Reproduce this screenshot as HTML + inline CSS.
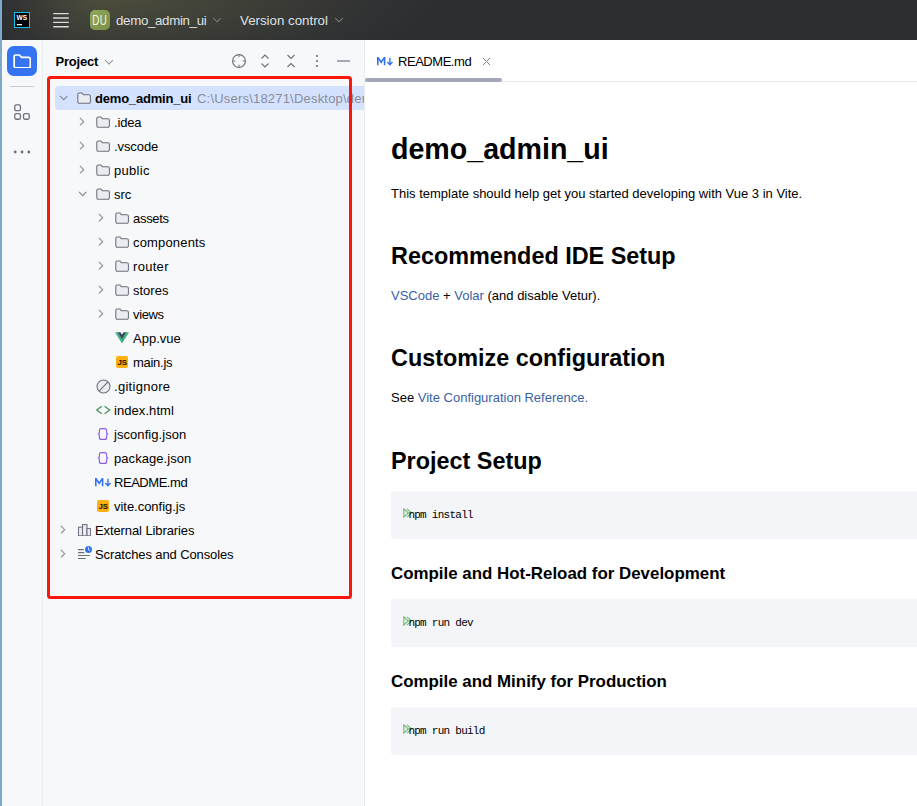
<!DOCTYPE html>
<html><head><meta charset="utf-8">
<style>
*{box-sizing:border-box;margin:0;padding:0}
html,body{width:917px;height:806px;overflow:hidden;background:#fff}
body{font-family:"Liberation Sans",sans-serif;font-size:13px;color:#000;position:relative}
.abs{position:absolute}
#edge{left:0;top:0;width:2px;height:806px;background:#7ea9c9}
#top{left:2px;top:0;width:915px;height:40px;background:#2b2d30}
#top .t{position:absolute;color:#dfe1e5;font-size:13.3px;white-space:nowrap;line-height:16px}
#strip{left:2px;top:40px;width:41px;height:766px;background:#f7f8fa;border-right:1px solid #ebecf0}
#proj{left:43px;top:40px;width:322px;height:766px;background:#f7f8fa;border-right:1px solid #ebecf0;overflow:hidden}
#ed{left:365px;top:40px;width:552px;height:766px;background:#fff;overflow:hidden}
.row{position:absolute;left:0;height:24px;width:322px;white-space:nowrap}
.row span.l{position:absolute;top:5px;line-height:16px;font-size:13px;color:#000;letter-spacing:0}
.row svg{position:absolute}
#md{position:absolute;left:26px;top:0;width:600px}
#md .x{position:absolute;left:0;white-space:nowrap}
#md h1,#md h2,#md h3{font-weight:bold;color:#000;line-height:1}
.code{position:absolute;left:0;width:560px;height:48px;background:#f3f5f8;border-radius:3px}
.code span{position:absolute;left:17.4px;top:16.5px;font-family:"Liberation Mono",monospace;font-size:11px;letter-spacing:-0.74px;line-height:14px;color:#000;white-space:pre}
a{color:#3a5fa8;text-decoration:none}
</style></head><body>
<div id="edge" class="abs"></div>
<div id="top" class="abs"><div class="abs" style="left:0;top:0;width:98px;height:40px;background:radial-gradient(ellipse 115px 85px at 98px -4px,#4d4e3a 0%,#46473a 20%,#3b3c36 50%,#303233 80%,#2b2d30 100%)"></div><div class="abs" style="left:98px;top:0;width:420px;height:40px;background:radial-gradient(ellipse 350px 85px at 0px -4px,#4d4e3a 0%,#46473a 20%,#3b3c36 50%,#303233 80%,#2b2d30 100%)"></div>
  <!-- WS logo -->
  <svg class="abs" style="left:12px;top:12px" width="16" height="16" viewBox="0 0 16 16"><rect x="0.5" y="0.5" width="15" height="15" fill="#000" stroke="#12c0ea"/><text x="2.6" y="8" font-family="Liberation Sans" font-weight="bold" font-size="6.6" fill="#fff" textLength="10.6" lengthAdjust="spacingAndGlyphs">WS</text><rect x="2.8" y="12" width="5.2" height="1.3" fill="#fff"/></svg>
  <svg class="abs" style="left:51px;top:12px" width="16" height="16" viewBox="0 0 16 16" fill="#d8dade"><rect x="0" y="0.9" width="16" height="1.4" rx="0.7"/><rect x="0" y="5.3" width="16" height="1.4" rx="0.7"/><rect x="0" y="9.7" width="16" height="1.4" rx="0.7"/><rect x="0" y="14.1" width="16" height="1.4" rx="0.7"/></svg>
  <div class="abs" style="left:88px;top:10px;width:20px;height:20px;border-radius:5px;background:linear-gradient(135deg,#90a657,#7a9047);color:#f4f6ee;font-size:14px;line-height:21px;text-align:center;letter-spacing:0.6px;overflow:visible"><span style="display:inline-block;transform:scaleX(0.7);margin-left:-4px;margin-right:-4px">DU</span></div>
  <div class="t" style="left:114px;top:13px;letter-spacing:-0.33px">demo_admin_ui</div>
  <svg class="abs" style="left:210px;top:16px" width="10" height="8" viewBox="0 0 10 8" fill="none" stroke="#7d8088" stroke-width="1.05"><path d="M1.2 2l3.8 3.8 3.8-3.8"/></svg>
  <div class="t" style="left:238px;top:13px">Version control</div>
  <svg class="abs" style="left:332px;top:16px" width="10" height="8" viewBox="0 0 10 8" fill="none" stroke="#7d8088" stroke-width="1.05"><path d="M1.2 2l3.8 3.8 3.8-3.8"/></svg>
</div>
<div id="strip" class="abs">
  <div class="abs" style="left:5px;top:6px;width:30px;height:30px;border-radius:7px;background:#3574f0"></div>
  <svg class="abs" style="left:10.7px;top:13.6px" width="18.5" height="14.8" preserveAspectRatio="none" viewBox="0 0 16 14" fill="none" stroke="#fff" stroke-width="1.5" stroke-linejoin="round"><path d="M1 2.5a1.5 1.5 0 0 1 1.5-1.5h3l2 2.2h6a1.5 1.5 0 0 1 1.5 1.5v6.8a1.5 1.5 0 0 1-1.5 1.5h-11a1.5 1.5 0 0 1-1.5-1.5z"/></svg>
  <div class="abs" style="left:8px;top:46px;width:24px;height:1.2px;background:#c9ccd6"></div>
  <svg class="abs" style="left:12px;top:64px" width="17" height="17" viewBox="0 0 17 17" fill="none" stroke="#6c707e" stroke-width="1.3"><rect x="0.75" y="0.95" width="5.7" height="5.7" rx="1.4"/><rect x="0.75" y="9.55" width="5.7" height="5.7" rx="1.4"/><rect x="9.55" y="9.55" width="5.7" height="5.7" rx="1.4"/></svg>
  <svg class="abs" style="left:11px;top:110px" width="18" height="4" viewBox="0 0 18 4" fill="#6c707e"><circle cx="2.2" cy="2" r="1.45"/><circle cx="9" cy="2" r="1.45"/><circle cx="15.8" cy="2" r="1.45"/></svg>
</div>
<div id="proj" class="abs">
  <div class="abs" style="left:12.5px;top:14.4px;font-weight:bold;font-size:13px;line-height:16px;color:#000;letter-spacing:-0.2px">Project</div>
  <svg class="abs" style="left:61px;top:18px" width="10" height="8" viewBox="0 0 10 8" fill="none" stroke="#868a98" stroke-width="1.05"><path d="M1 2l4 4 4-4"/></svg>
  <!-- header icons -->
  <svg class="abs" style="left:188px;top:13px" width="16" height="16" viewBox="0 0 16 16" fill="none" stroke="#6c707e" stroke-width="1.1"><circle cx="8" cy="8" r="6.4"/><path d="M8 1.6v2.8M8 11.6v2.8M1.6 8h2.8M11.6 8h2.8" stroke-width="0.9"/></svg>
  <svg class="abs" style="left:214px;top:13px" width="16" height="16" viewBox="0 0 16 16" fill="none" stroke="#6c707e" stroke-width="1.1"><path d="M4.5 5.5l3.5-3.5 3.5 3.5M4.5 10.5l3.5 3.5 3.5-3.5"/></svg>
  <svg class="abs" style="left:240px;top:13px" width="16" height="16" viewBox="0 0 16 16" fill="none" stroke="#6c707e" stroke-width="1.1"><path d="M4.5 2l3.5 3.5 3.5-3.5M4.5 14l3.5-3.5 3.5 3.5"/></svg>
  <svg class="abs" style="left:266px;top:13px" width="16" height="16" viewBox="0 0 16 16" fill="#6c707e"><circle cx="8" cy="3" r="1.1"/><circle cx="8" cy="8" r="1.1"/><circle cx="8" cy="13" r="1.1"/></svg>
  <div class="abs" style="left:293.5px;top:20px;width:13px;height:1.6px;background:#a3a7b6"></div>
  <div id="tree">
<div class="abs" style="left:12px;top:46px;width:310px;height:24px;border-radius:4px 0 0 4px;background:#d4e2ff"></div>
<div class="row" style="top:46px"><svg style="left:16px;top:9.4px" width="9.4" height="6" viewBox="0 0 9.4 6" fill="none" stroke="#818594" stroke-width="1.05"><path d="M1 0.9l3.7 3.8 3.7-3.8"/></svg><svg style="left:34px;top:6px" width="14" height="12" viewBox="0 0 14 12"><path d="M0.8 2.4a1.5 1.5 0 0 1 1.5-1.5h2.5l1.8 1.9h5.3a1.5 1.5 0 0 1 1.5 1.5v5.4a1.5 1.5 0 0 1-1.5 1.5h-9.6a1.5 1.5 0 0 1-1.5-1.5z" fill="#ebecf0" stroke="#6c707e" stroke-width="1.05" stroke-linejoin="round"/></svg><span class="l" style="left:52px;letter-spacing:-0.2px;font-weight:bold;">demo_admin_ui</span><span class="l" style="left:154px;color:#898d99;letter-spacing:0.2px">C:\Users\18271\Desktop\demo_admin_ui</span></div>
<div class="row" style="top:70px"><svg style="left:35.5px;top:7.3px" width="6" height="9.4" viewBox="0 0 6 9.4" fill="none" stroke="#868a98" stroke-width="1.05"><path d="M0.9 1l3.8 3.7-3.8 3.7"/></svg><svg style="left:53px;top:6px" width="14" height="12" viewBox="0 0 14 12"><path d="M0.8 2.4a1.5 1.5 0 0 1 1.5-1.5h2.5l1.8 1.9h5.3a1.5 1.5 0 0 1 1.5 1.5v5.4a1.5 1.5 0 0 1-1.5 1.5h-9.6a1.5 1.5 0 0 1-1.5-1.5z" fill="#ebecf0" stroke="#6c707e" stroke-width="1.05" stroke-linejoin="round"/></svg><span class="l" style="left:71px;letter-spacing:-0.15px;">.idea</span></div>
<div class="row" style="top:94px"><svg style="left:35.5px;top:7.3px" width="6" height="9.4" viewBox="0 0 6 9.4" fill="none" stroke="#868a98" stroke-width="1.05"><path d="M0.9 1l3.8 3.7-3.8 3.7"/></svg><svg style="left:53px;top:6px" width="14" height="12" viewBox="0 0 14 12"><path d="M0.8 2.4a1.5 1.5 0 0 1 1.5-1.5h2.5l1.8 1.9h5.3a1.5 1.5 0 0 1 1.5 1.5v5.4a1.5 1.5 0 0 1-1.5 1.5h-9.6a1.5 1.5 0 0 1-1.5-1.5z" fill="#ebecf0" stroke="#6c707e" stroke-width="1.05" stroke-linejoin="round"/></svg><span class="l" style="left:71px;letter-spacing:-0.08px;">.vscode</span></div>
<div class="row" style="top:118px"><svg style="left:35.5px;top:7.3px" width="6" height="9.4" viewBox="0 0 6 9.4" fill="none" stroke="#868a98" stroke-width="1.05"><path d="M0.9 1l3.8 3.7-3.8 3.7"/></svg><svg style="left:53px;top:6px" width="14" height="12" viewBox="0 0 14 12"><path d="M0.8 2.4a1.5 1.5 0 0 1 1.5-1.5h2.5l1.8 1.9h5.3a1.5 1.5 0 0 1 1.5 1.5v5.4a1.5 1.5 0 0 1-1.5 1.5h-9.6a1.5 1.5 0 0 1-1.5-1.5z" fill="#ebecf0" stroke="#6c707e" stroke-width="1.05" stroke-linejoin="round"/></svg><span class="l" style="left:71px;letter-spacing:0.3px;">public</span></div>
<div class="row" style="top:142px"><svg style="left:35px;top:9.4px" width="9.4" height="6" viewBox="0 0 9.4 6" fill="none" stroke="#818594" stroke-width="1.05"><path d="M1 0.9l3.7 3.8 3.7-3.8"/></svg><svg style="left:53px;top:6px" width="14" height="12" viewBox="0 0 14 12"><path d="M0.8 2.4a1.5 1.5 0 0 1 1.5-1.5h2.5l1.8 1.9h5.3a1.5 1.5 0 0 1 1.5 1.5v5.4a1.5 1.5 0 0 1-1.5 1.5h-9.6a1.5 1.5 0 0 1-1.5-1.5z" fill="#ebecf0" stroke="#6c707e" stroke-width="1.05" stroke-linejoin="round"/></svg><span class="l" style="left:71px;letter-spacing:0px;">src</span></div>
<div class="row" style="top:166px"><svg style="left:54.5px;top:7.3px" width="6" height="9.4" viewBox="0 0 6 9.4" fill="none" stroke="#868a98" stroke-width="1.05"><path d="M0.9 1l3.8 3.7-3.8 3.7"/></svg><svg style="left:72px;top:6px" width="14" height="12" viewBox="0 0 14 12"><path d="M0.8 2.4a1.5 1.5 0 0 1 1.5-1.5h2.5l1.8 1.9h5.3a1.5 1.5 0 0 1 1.5 1.5v5.4a1.5 1.5 0 0 1-1.5 1.5h-9.6a1.5 1.5 0 0 1-1.5-1.5z" fill="#ebecf0" stroke="#6c707e" stroke-width="1.05" stroke-linejoin="round"/></svg><span class="l" style="left:90px;letter-spacing:-0.3px;">assets</span></div>
<div class="row" style="top:190px"><svg style="left:54.5px;top:7.3px" width="6" height="9.4" viewBox="0 0 6 9.4" fill="none" stroke="#868a98" stroke-width="1.05"><path d="M0.9 1l3.8 3.7-3.8 3.7"/></svg><svg style="left:72px;top:6px" width="14" height="12" viewBox="0 0 14 12"><path d="M0.8 2.4a1.5 1.5 0 0 1 1.5-1.5h2.5l1.8 1.9h5.3a1.5 1.5 0 0 1 1.5 1.5v5.4a1.5 1.5 0 0 1-1.5 1.5h-9.6a1.5 1.5 0 0 1-1.5-1.5z" fill="#ebecf0" stroke="#6c707e" stroke-width="1.05" stroke-linejoin="round"/></svg><span class="l" style="left:90px;letter-spacing:0.17px;">components</span></div>
<div class="row" style="top:214px"><svg style="left:54.5px;top:7.3px" width="6" height="9.4" viewBox="0 0 6 9.4" fill="none" stroke="#868a98" stroke-width="1.05"><path d="M0.9 1l3.8 3.7-3.8 3.7"/></svg><svg style="left:72px;top:6px" width="14" height="12" viewBox="0 0 14 12"><path d="M0.8 2.4a1.5 1.5 0 0 1 1.5-1.5h2.5l1.8 1.9h5.3a1.5 1.5 0 0 1 1.5 1.5v5.4a1.5 1.5 0 0 1-1.5 1.5h-9.6a1.5 1.5 0 0 1-1.5-1.5z" fill="#ebecf0" stroke="#6c707e" stroke-width="1.05" stroke-linejoin="round"/></svg><span class="l" style="left:90px;letter-spacing:0.3px;">router</span></div>
<div class="row" style="top:238px"><svg style="left:54.5px;top:7.3px" width="6" height="9.4" viewBox="0 0 6 9.4" fill="none" stroke="#868a98" stroke-width="1.05"><path d="M0.9 1l3.8 3.7-3.8 3.7"/></svg><svg style="left:72px;top:6px" width="14" height="12" viewBox="0 0 14 12"><path d="M0.8 2.4a1.5 1.5 0 0 1 1.5-1.5h2.5l1.8 1.9h5.3a1.5 1.5 0 0 1 1.5 1.5v5.4a1.5 1.5 0 0 1-1.5 1.5h-9.6a1.5 1.5 0 0 1-1.5-1.5z" fill="#ebecf0" stroke="#6c707e" stroke-width="1.05" stroke-linejoin="round"/></svg><span class="l" style="left:90px;letter-spacing:0px;">stores</span></div>
<div class="row" style="top:262px"><svg style="left:54.5px;top:7.3px" width="6" height="9.4" viewBox="0 0 6 9.4" fill="none" stroke="#868a98" stroke-width="1.05"><path d="M0.9 1l3.8 3.7-3.8 3.7"/></svg><svg style="left:72px;top:6px" width="14" height="12" viewBox="0 0 14 12"><path d="M0.8 2.4a1.5 1.5 0 0 1 1.5-1.5h2.5l1.8 1.9h5.3a1.5 1.5 0 0 1 1.5 1.5v5.4a1.5 1.5 0 0 1-1.5 1.5h-9.6a1.5 1.5 0 0 1-1.5-1.5z" fill="#ebecf0" stroke="#6c707e" stroke-width="1.05" stroke-linejoin="round"/></svg><span class="l" style="left:90px;letter-spacing:-0.35px;">views</span></div>
<div class="row" style="top:286px"><svg style="left:72px;top:6px" width="14" height="12" viewBox="0 0 14 12"><path d="M0 0.2h3l4 6.6 4-6.6h3l-7 11.4z" fill="#3fb27f"/><path d="M2.8 0.2h2.7l1.5 2.5 1.5-2.5h2.7l-4.2 7z" fill="#35495e"/></svg><span class="l" style="left:90px;letter-spacing:0px;">App.vue</span></div>
<div class="row" style="top:310px"><svg style="left:73px;top:6px" width="12" height="12" viewBox="0 0 12 12"><rect x="0" y="0" width="12" height="12" rx="2" fill="#ffaf0f"/><text x="6.1" y="9" text-anchor="middle" font-family="Liberation Sans" font-weight="bold" font-size="7.8" fill="#1a1100" letter-spacing="-0.1">JS</text></svg><span class="l" style="left:90px;letter-spacing:-0.28px;">main.js</span></div>
<div class="row" style="top:334px"><svg style="left:52.7px;top:4.8px" width="15" height="15" viewBox="0 0 15 15" fill="none" stroke="#6c707e" stroke-width="1.05"><circle cx="7.5" cy="7.5" r="6.5" fill="#ebecf0"/><path d="M3.1 12.1l8.8-9.2"/></svg><span class="l" style="left:71px;letter-spacing:0.28px;">.gitignore</span></div>
<div class="row" style="top:358px"><svg style="left:52px;top:7px" width="16" height="10" viewBox="0 0 16 10" fill="none" stroke="#4b9a5e" stroke-width="1.4"><path d="M6.8 1.3l-5 3.7 5 3.7M9.6 1.3l5 3.7-5 3.7"/></svg><span class="l" style="left:71px;letter-spacing:0.07px;">index.html</span></div>
<div class="row" style="top:382px"><svg style="left:54px;top:6px" width="12" height="12" viewBox="0 0 12 12" fill="none" stroke="#8a5cf5" stroke-width="1.15"><path d="M4.4 0.6H7.6Q9.6 0.6 9.6 2.6V4.4Q9.6 6 11.3 6Q9.6 6 9.6 7.6V9.4Q9.6 11.4 7.6 11.4H4.4Q2.4 11.4 2.4 9.4V7.6Q2.4 6 0.7 6Q2.4 6 2.4 4.4V2.6Q2.4 0.6 4.4 0.6Z"/></svg><span class="l" style="left:71px;letter-spacing:0.06px;">jsconfig.json</span></div>
<div class="row" style="top:406px"><svg style="left:54px;top:6px" width="12" height="12" viewBox="0 0 12 12" fill="none" stroke="#8a5cf5" stroke-width="1.15"><path d="M4.4 0.6H7.6Q9.6 0.6 9.6 2.6V4.4Q9.6 6 11.3 6Q9.6 6 9.6 7.6V9.4Q9.6 11.4 7.6 11.4H4.4Q2.4 11.4 2.4 9.4V7.6Q2.4 6 0.7 6Q2.4 6 2.4 4.4V2.6Q2.4 0.6 4.4 0.6Z"/></svg><span class="l" style="left:71px;letter-spacing:0.06px;">package.json</span></div>
<div class="row" style="top:430px"><svg style="left:52.4px;top:8px" width="16" height="9" viewBox="0 0 16 9"><path d="M0.8 8.3V0.9h0.3l3.1 4.4 3.1-4.4h0.3v7.4" fill="none" stroke="#3574f0" stroke-width="1.6"/><path d="M12.9 0.8v6.6M10.3 5l2.6 2.7 2.6-2.7" fill="none" stroke="#3574f0" stroke-width="1.4"/></svg><span class="l" style="left:71px;letter-spacing:-0.46px;">README.md</span></div>
<div class="row" style="top:454px"><svg style="left:54px;top:6px" width="12" height="12" viewBox="0 0 12 12"><rect x="0" y="0" width="12" height="12" rx="2" fill="#ffaf0f"/><text x="6.1" y="9" text-anchor="middle" font-family="Liberation Sans" font-weight="bold" font-size="7.8" fill="#1a1100" letter-spacing="-0.1">JS</text></svg><span class="l" style="left:71px;letter-spacing:-0.03px;">vite.config.js</span></div>
<div class="row" style="top:478px"><svg style="left:16.5px;top:7.3px" width="6" height="9.4" viewBox="0 0 6 9.4" fill="none" stroke="#868a98" stroke-width="1.05"><path d="M0.9 1l3.8 3.7-3.8 3.7"/></svg><svg style="left:35px;top:5.5px" width="13" height="12.5" viewBox="0 0 13 12.5" fill="#ebecf0" stroke="#6c707e" stroke-width="1.05"><rect x="0.5" y="3.2" width="4" height="8.6"/><rect x="4.5" y="0.6" width="4.5" height="11.2"/><rect x="9" y="4.6" width="3.6" height="7.2"/></svg><span class="l" style="left:52px;letter-spacing:-0.1px;">External Libraries</span></div>
<div class="row" style="top:502px"><svg style="left:16.5px;top:7.3px" width="6" height="9.4" viewBox="0 0 6 9.4" fill="none" stroke="#868a98" stroke-width="1.05"><path d="M0.9 1l3.8 3.7-3.8 3.7"/></svg><svg style="left:35px;top:3px" width="15" height="15" viewBox="0 0 15 15" fill="none" stroke="#6c707e" stroke-width="1.05"><path d="M0 4.6h5.8M0 7.6h6.3M0 10.5h11.7M0 13.5h7.7"/><circle cx="10.5" cy="4.4" r="3.5" fill="#3574f0" stroke="none"/><path d="M10.5 2.4v2.2l1.4 0.9" stroke="#fff" stroke-width="0.9"/></svg><span class="l" style="left:52px;letter-spacing:-0.11px;">Scratches and Consoles</span></div>
</div><!--/tree-->
</div>
<div id="ed" class="abs">
  <div class="abs" style="left:0;top:41px;width:552px;height:1px;background:#ebecf0"></div>
  <div class="abs" style="left:0;top:38px;width:137px;height:4px;border-radius:2px;background:#a3a8ba"></div>
  <svg class="abs" style="left:12px;top:17px" width="16" height="9" viewBox="0 0 16 9"><path d="M0.8 8.3V0.9h0.3l3.1 4.4 3.1-4.4h0.3v7.4" fill="none" stroke="#3574f0" stroke-width="1.6" stroke-linejoin="miter"/><path d="M12.9 0.8v6.6M10.3 5l2.6 2.7 2.6-2.7" fill="none" stroke="#3574f0" stroke-width="1.4"/></svg>
  <div class="abs" style="left:33px;top:14px;font-size:13px;line-height:16px;white-space:nowrap;letter-spacing:-0.46px">README.md</div>
  <svg class="abs" style="left:117px;top:17px" width="9" height="9" viewBox="0 0 9 9" fill="none" stroke="#818594" stroke-width="1"><path d="M1 1l7 7M8 1l-7 7"/></svg>
  <div id="md">
    <h1 class="x" style="top:94.5px;font-size:28.6px">demo_admin_ui</h1>
    <div class="x" style="top:146px;line-height:16px">This template should help get you started developing with Vue 3 in Vite.</div>
    <h2 class="x" style="top:205px;font-size:23.4px">Recommended IDE Setup</h2>
    <div class="x" style="top:248px;line-height:16px"><a>VSCode</a> + <a>Volar</a> (and disable Vetur).</div>
    <h2 class="x" style="top:307px;font-size:23.4px">Customize configuration</h2>
    <div class="x" style="top:350px;line-height:16px">See <a>Vite Configuration Reference.</a></div>
    <h2 class="x" style="top:410px;font-size:23.4px">Project Setup</h2>
    <div class="code" style="top:451px"><svg style="position:absolute;left:11.6px;top:17px" width="10" height="10" viewBox="0 0 10 10" fill="none" stroke="#6fba78" stroke-width="1.1"><path d="M0.8 0.8v8.4l4.6-4.2z" fill="#e6f4e7"/><path d="M4 0.9l4.6 4.1-4.6 4.1"/></svg><span>npm install</span></div>
    <h3 class="x" style="top:526px;font-size:16.9px">Compile and Hot-Reload for Development</h3>
    <div class="code" style="top:559px"><svg style="position:absolute;left:11.6px;top:17px" width="10" height="10" viewBox="0 0 10 10" fill="none" stroke="#6fba78" stroke-width="1.1"><path d="M0.8 0.8v8.4l4.6-4.2z" fill="#e6f4e7"/><path d="M4 0.9l4.6 4.1-4.6 4.1"/></svg><span>npm run dev</span></div>
    <h3 class="x" style="top:634px;font-size:16.9px">Compile and Minify for Production</h3>
    <div class="code" style="top:667px"><svg style="position:absolute;left:11.6px;top:17px" width="10" height="10" viewBox="0 0 10 10" fill="none" stroke="#6fba78" stroke-width="1.1"><path d="M0.8 0.8v8.4l4.6-4.2z" fill="#e6f4e7"/><path d="M4 0.9l4.6 4.1-4.6 4.1"/></svg><span>npm run build</span></div>
  </div>
</div>
<div class="abs" id="red" style="left:47px;top:76px;width:305px;height:523px;border:3px solid #fb170b;border-radius:3.5px"></div>
</body></html>
